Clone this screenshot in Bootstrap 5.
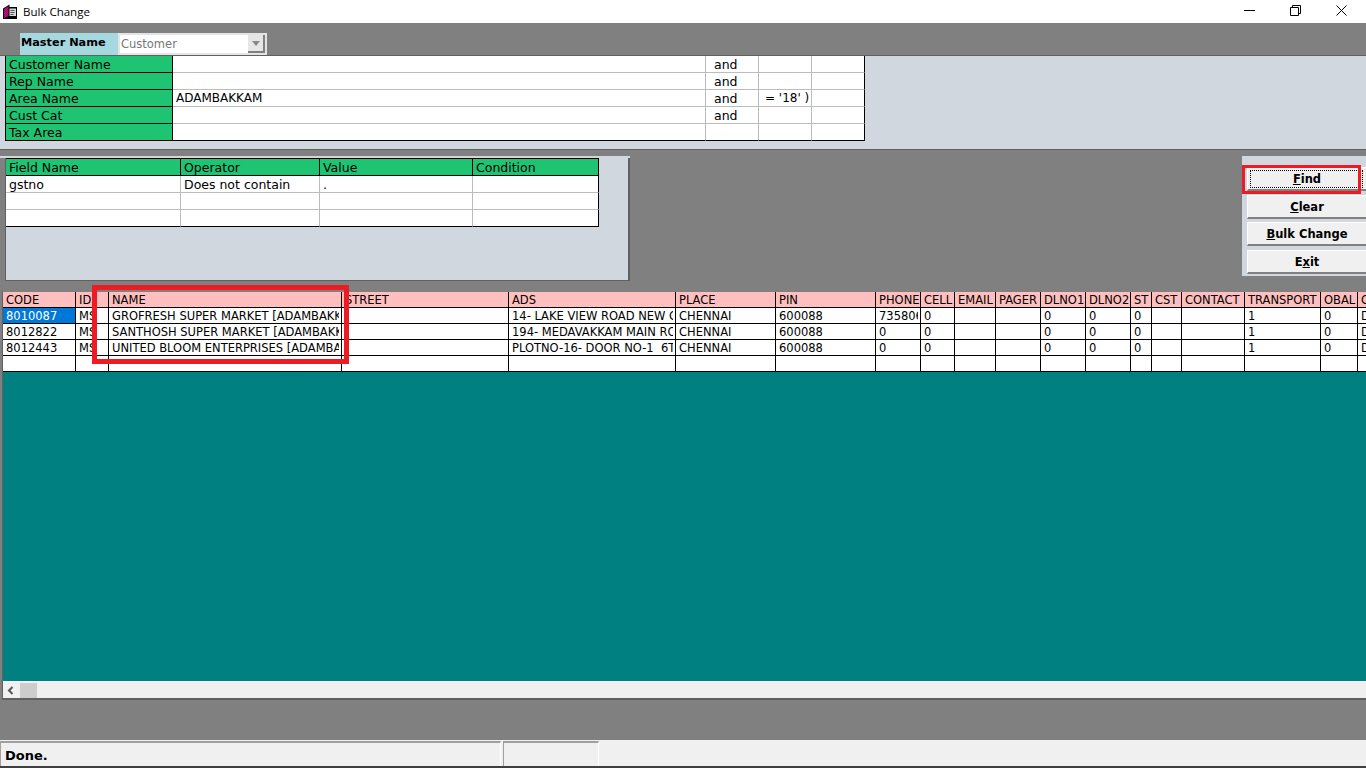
<!DOCTYPE html>
<html lang="en">
<head>
<meta charset="utf-8">
<title>Bulk Change</title>
<link href="https://cdn.jsdelivr.net/npm/bootstrap@5.3.0/dist/css/bootstrap.min.css" rel="stylesheet">
<style>
html,body{height:768px;overflow:hidden}
body{background:#808080;font-family:"DejaVu Sans","Liberation Sans",sans-serif;color:#000;position:relative}
.win-title{height:23px;background:#fff;font-family:"Open Sans","Liberation Sans",sans-serif;font-size:11.5px;padding-left:2px}
.win-title .ttl{margin-left:5px}
.win-ctrls{margin-right:2px}
.win-ctrl{width:46px;height:23px;padding-top:5px}
.book-ico{margin-top:1px}
.master-row{height:32px;padding:10px 0 0 20px}
.master-label{width:98px;height:22px;background:#a6d8e0;font-weight:700;font-size:11.3px;line-height:20px;padding-left:1px}
.master-select{width:149px;height:22px;background:#fff;border:2px solid #e4e4e4;font-size:11.5px;color:#777;padding-left:1px;line-height:19px;position:relative}
.master-arrow{width:17px;height:18px;background:#e6e6e6;border-right:2px solid #808080;border-bottom:2px solid #808080}
.panel-a{height:95px;background:#d0d7de;border-top:1px solid #606060;border-bottom:1px solid #606060;padding-left:5px}
.panel-b{width:630px;border-top:2px solid #d0d7de;padding-left:5px}
.panel-b-in{height:123px;background:#d0d7de;border-left:1px solid #606060;border-right:2px solid #606060;border-bottom:1px solid #606060}
.gap-row{padding-top:6px;height:141px}
.btn-panel{width:124px;height:120px;background:#d0d7de;padding:11px 0 0 5px}
.legacy-btn{display:block;width:119px;height:24px;background:#f0f0f0;border:0;border-top:1px solid #fff;border-left:1px solid #fff;border-bottom:2px solid #808080;border-radius:0;color:#000;font-weight:700;font-size:11.5px;padding:1px 0 0;margin-bottom:3.6px;text-align:center;line-height:20px}
.legacy-btn.is-focus{outline:1px dotted #000;outline-offset:-4px}
table.form-grid{table-layout:fixed;border-collapse:separate;border-spacing:0;background:#fff;font-size:12.5px;margin:0}
.form-grid td,.form-grid th{box-sizing:border-box;height:17px;padding:1px 0 0 3px;line-height:15px;font-weight:400;border:0;border-right:1px solid #bcbcbc;border-bottom:1px solid #bcbcbc;white-space:nowrap;overflow:hidden;color:#000}
.form-grid .green{background:#1fc472;border-color:#000}
.form-grid tr:last-child td{border-bottom-color:#000}
.form-grid tr td:last-child,.form-grid tr th:last-child{border-right-color:#000}
.grid-one{width:860px;border-left:1px solid #000}
.grid-one td:nth-child(1){width:167px}
.grid-one td:nth-child(2){width:533px}
.grid-one td:nth-child(n+3){width:53px}
.grid-two{width:593px}
.grid-two th{border-top:1px solid #000;height:18px}
.grid-two tr>*:nth-child(1){width:175px}
.grid-two tr>*:nth-child(2){width:139px}
.grid-two tr>*:nth-child(3){width:153px}
.grid-two tr>*:nth-child(4){width:126px}
.form-grid td.cond-and{padding-left:8px}
.form-grid td.cond-val{padding-left:6px;font-size:12px}
.form-grid td.val-caps{font-size:12px}
table.data-grid{table-layout:fixed;border-collapse:separate;border-spacing:0;background:#fff;font-size:11.5px;width:1395px;margin:0}
.data-grid th,.data-grid td{box-sizing:border-box;height:16px;padding:1px 0 0 3px;line-height:14px;border:0;border-right:1px solid #000;border-bottom:1px solid #000;font-weight:400;white-space:nowrap;overflow:hidden;color:#000;position:relative}
.data-grid td::after{content:"";position:absolute;top:0;bottom:0;right:0;width:2px;background:#fff}
.data-grid td.sel::after{display:none}
.data-grid th{background:#ffbfbf}
.data-grid td.sel{background:#0078d7;color:#fff}
.data-grid th:nth-child(1){width:73px}
.data-grid th:nth-child(2){width:33px}
.data-grid th:nth-child(3){width:233px}
.data-grid th:nth-child(4),.data-grid th:nth-child(5){width:167px}
.data-grid th:nth-child(6),.data-grid th:nth-child(7){width:100px}
.data-grid th:nth-child(8){width:45px}
.data-grid th:nth-child(9){width:34px}
.data-grid th:nth-child(10){width:41px}
.data-grid th:nth-child(11),.data-grid th:nth-child(12),.data-grid th:nth-child(13){width:45px}
.data-grid th:nth-child(14){width:21px}
.data-grid th:nth-child(15){width:30px}
.data-grid th:nth-child(16){width:63px}
.data-grid th:nth-child(17){width:76px}
.data-grid th:nth-child(18){width:37px}
.data-grid th:nth-child(19){width:40px}
.grid-wrap{margin-left:2px;height:409px;border-left:1px solid #606060;border-bottom:2px solid #606060;border-top:1px solid #808080;background:#008080;overflow:hidden;display:flex;flex-direction:column}
.grid-scroll{overflow:hidden;flex:1 1 auto}
.hbar{height:17px;flex:none;background:#f0f0f0;border-top:1px solid #fff}
.hbar-thumb{width:17px;height:15px;background:#cdcdcd;margin-left:8px}
.hbar-arrow{width:9px;padding-left:4px;line-height:0}
.status-row{position:absolute;left:0;right:0;top:740px;height:28px;background:#f0f0f0;border-bottom:2px solid #404040;padding-top:1px}
.st-cell{height:25px;border-top:2px solid #a0a0a0;border-left:1px solid #a0a0a0;border-right:1px solid #fff;font-weight:700;font-size:13px;padding-left:4px;line-height:26px}
.st-main{width:501px}
.st-side{width:96px;margin-left:2px}
.red-mark{position:absolute;border-style:solid;border-color:#ed1c24;pointer-events:none}
.mark-name{left:92px;top:285px;width:257px;height:79px;border-width:5px}
.mark-find{left:1242px;top:165px;width:119px;height:29px;border-width:3px}
</style>
</head>
<body>
<div class="win-title d-flex align-items-center">
  <svg class="book-ico" width="16" height="16" viewBox="0 0 16 16"><defs><pattern id="dith" width="2" height="2" patternUnits="userSpaceOnUse"><rect width="2" height="2" fill="#e0104a"/><rect width="1" height="1" fill="#6a0a9a"/><rect x="1" y="1" width="1" height="1" fill="#6a0a9a"/></pattern></defs><path d="M1 4.500L7.500.5V3H15v12H1z" fill="#000"/><path d="M2 5l4.500-3v10L2 14.500z" fill="url(#dith)"/><path d="M7.500 4.500h6.500v7.500h-6.500z" fill="#d8d8d8"/><path d="M8.500 6.500h4M8.500 8.500h4M8.500 10.500h3" stroke="#555" stroke-width="1"/></svg>
  <span class="ttl">Bulk Change</span>
  <div class="ms-auto d-flex win-ctrls align-self-start">
    <div class="win-ctrl d-flex justify-content-center"><svg width="11" height="11" viewBox="0 0 11 11"><path d="M0 5.500h11" stroke="#000"/></svg></div>
    <div class="win-ctrl d-flex justify-content-center"><svg width="11" height="11" viewBox="0 0 11 11"><path d="M.5 2.500h8v8h-8zM2.500 2.500v-2h8v8h-2" fill="none" stroke="#000"/></svg></div>
    <div class="win-ctrl d-flex justify-content-center"><svg width="11" height="11" viewBox="0 0 11 11"><path d="M.5.5l10 10M10.500.5l-10 10" stroke="#000"/></svg></div>
  </div>
</div>
<div class="master-row d-flex">
  <div class="master-label">Master Name</div>
  <div class="master-select">Customer
    <span class="master-arrow position-absolute top-0 end-0 d-flex align-items-center justify-content-center"><svg width="8" height="5" viewBox="0 0 8 5"><path d="M0 0h8L4 5z" fill="#888"/></svg></span>
  </div>
</div>
<div class="panel-a">
  <table class="form-grid grid-one">
    <tr><td class="green">Customer Name</td><td></td><td class="cond-and">and</td><td></td><td></td></tr>
    <tr><td class="green">Rep Name</td><td></td><td class="cond-and">and</td><td></td><td></td></tr>
    <tr><td class="green">Area Name</td><td class="val-caps">ADAMBAKKAM</td><td class="cond-and">and</td><td class="cond-val">= '18' )</td><td></td></tr>
    <tr><td class="green">Cust Cat</td><td></td><td class="cond-and">and</td><td></td><td></td></tr>
    <tr><td class="green">Tax Area</td><td></td><td></td><td></td><td></td></tr>
  </table>
</div>
<div class="gap-row d-flex justify-content-between align-items-start">
  <div class="panel-b">
    <div class="panel-b-in">
    <table class="form-grid grid-two">
      <tr><th class="green">Field Name</th><th class="green">Operator</th><th class="green">Value</th><th class="green">Condition</th></tr>
      <tr><td>gstno</td><td>Does not contain</td><td>.</td><td></td></tr>
      <tr><td></td><td></td><td></td><td></td></tr>
      <tr><td></td><td></td><td></td><td></td></tr>
    </table>
    </div>
  </div>
  <div class="btn-panel">
    <button type="button" class="btn legacy-btn is-focus"><u>F</u>ind</button>
    <button type="button" class="btn legacy-btn"><u>C</u>lear</button>
    <button type="button" class="btn legacy-btn"><u>B</u>ulk Change</button>
    <button type="button" class="btn legacy-btn">E<u>x</u>it</button>
  </div>
</div>
<div class="grid-wrap">
  <div class="grid-scroll">
  <table class="data-grid">
    <tr><th>CODE</th><th>ID</th><th>NAME</th><th>STREET</th><th>ADS</th><th>PLACE</th><th>PIN</th><th>PHONE</th><th>CELL</th><th>EMAIL</th><th>PAGER</th><th>DLNO1</th><th>DLNO2</th><th>ST</th><th>CST</th><th>CONTACT</th><th>TRANSPORT</th><th>OBAL</th><th>C</th></tr>
    <tr><td class="sel">8010087</td><td>MS</td><td>GROFRESH SUPER MARKET [ADAMBAKK</td><td></td><td>14- LAKE VIEW ROAD NEW C</td><td>CHENNAI</td><td>600088</td><td>735806</td><td>0</td><td></td><td></td><td>0</td><td>0</td><td>0</td><td></td><td></td><td>1</td><td>0</td><td>D</td></tr>
    <tr><td>8012822</td><td>MS</td><td>SANTHOSH SUPER MARKET [ADAMBAKK</td><td></td><td>194- MEDAVAKKAM MAIN RO</td><td>CHENNAI</td><td>600088</td><td>0</td><td>0</td><td></td><td></td><td>0</td><td>0</td><td>0</td><td></td><td></td><td>1</td><td>0</td><td>D</td></tr>
    <tr><td>8012443</td><td>MS</td><td>UNITED BLOOM ENTERPRISES [ADAMBA</td><td></td><td>PLOTNO-16- DOOR NO-1&nbsp; 6T</td><td>CHENNAI</td><td>600088</td><td>0</td><td>0</td><td></td><td></td><td>0</td><td>0</td><td>0</td><td></td><td></td><td>1</td><td>0</td><td>D</td></tr>
    <tr><td></td><td></td><td></td><td></td><td></td><td></td><td></td><td></td><td></td><td></td><td></td><td></td><td></td><td></td><td></td><td></td><td></td><td></td><td></td></tr>
  </table>
  </div>
  <div class="hbar d-flex align-items-center">
    <div class="hbar-arrow"><svg width="7" height="9" viewBox="0 0 7 9"><path d="M5.500 1L2 4.500 5.500 8" fill="none" stroke="#555" stroke-width="2"/></svg></div>
    <div class="hbar-thumb"></div>
  </div>
</div>
<div class="status-row d-flex">
  <div class="st-cell st-main">Done.</div>
  <div class="st-cell st-side"></div>
</div>
<div class="red-mark mark-name"></div>
<div class="red-mark mark-find"></div>
</body>
</html>
